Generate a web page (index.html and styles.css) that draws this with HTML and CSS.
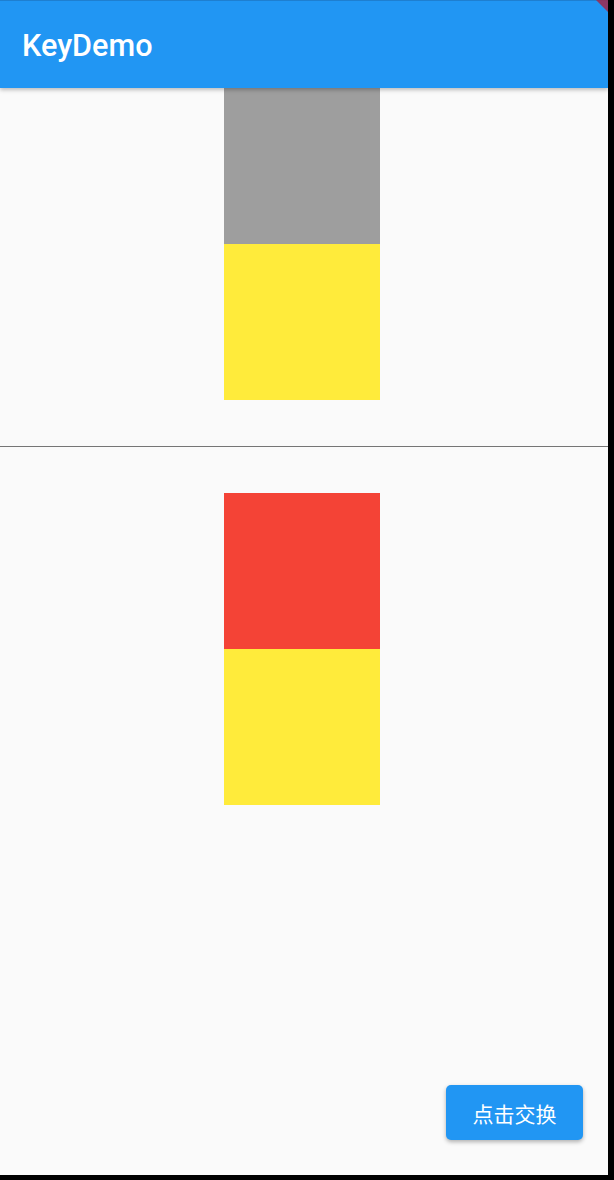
FILE: index.html
```html
<!DOCTYPE html>
<html>
<head>
<meta charset="utf-8">
<link rel="stylesheet" href="styles.css">
</head>
<body>
<div class="screen">
  <div class="app">
    <header class="appbar"><span class="title">KeyDemo</span></header>
    <div class="banner"></div>
    <main class="content">
      <section class="half top">
        <div class="box gray"></div>
        <div class="box yellow"></div>
      </section>
      <div class="divider"></div>
      <section class="half bottom">
        <div class="box red"></div>
        <div class="box yellow"></div>
      </section>
      <button class="fab">点击交换</button>
    </main>
  </div>
</div>
</body>
</html>
```
FILE: styles.css
```css
html, body { margin: 0; padding: 0; }
body { background: #000; width: 614px; height: 1180px; overflow: hidden; }
.screen { width: 614px; height: 1180px; background: #000; }
.app {
  position: relative;
  width: 608px; height: 1175px;
  background: #fafafa;
  overflow: hidden;
  display: flex; flex-direction: column;
}
.appbar {
  position: relative; z-index: 2;
  height: 88px; flex: none;
  background: #2196f3;
  border-top: 1px solid #1e7fd0;
  box-sizing: border-box;
  display: flex; align-items: center;
  padding-left: 22px;
  box-shadow: 0 2px 4px rgba(0,0,0,0.25);
}
.title {
  font-family: Roboto, "Noto Sans", sans-serif;
  font-weight: 500; font-size: 30.6px; color: #fff;
  margin-top: 2px;
}
.banner {
  position: absolute; z-index: 3; top: 0; right: 0;
  width: 0; height: 0;
  border-top: 12px solid #a0284a;
  border-left: 12px solid transparent;
  opacity: 0.85;
}
.content { position: relative; flex: 1; display: flex; flex-direction: column; }
.half { display: flex; flex-direction: column; align-items: center; padding-right: 4px; }
.top { height: 358px; }
.bottom { padding-top: 46px; }
.box { width: 156px; height: 156px; }
.gray { background: #9e9e9e; }
.yellow { background: #ffeb3b; }
.red { background: #f44336; }
.divider { height: 1px; background: #757575; }
.fab {
  position: absolute; right: 25px; bottom: 35px;
  width: 137px; height: 55px;
  background: #2196f3; color: #fff;
  border: none; border-radius: 5px;
  font-family: "Noto Sans CJK SC", sans-serif;
  font-size: 21px;
  box-shadow: 0 2px 4px rgba(0,0,0,0.3);
  padding: 0;
}
```
